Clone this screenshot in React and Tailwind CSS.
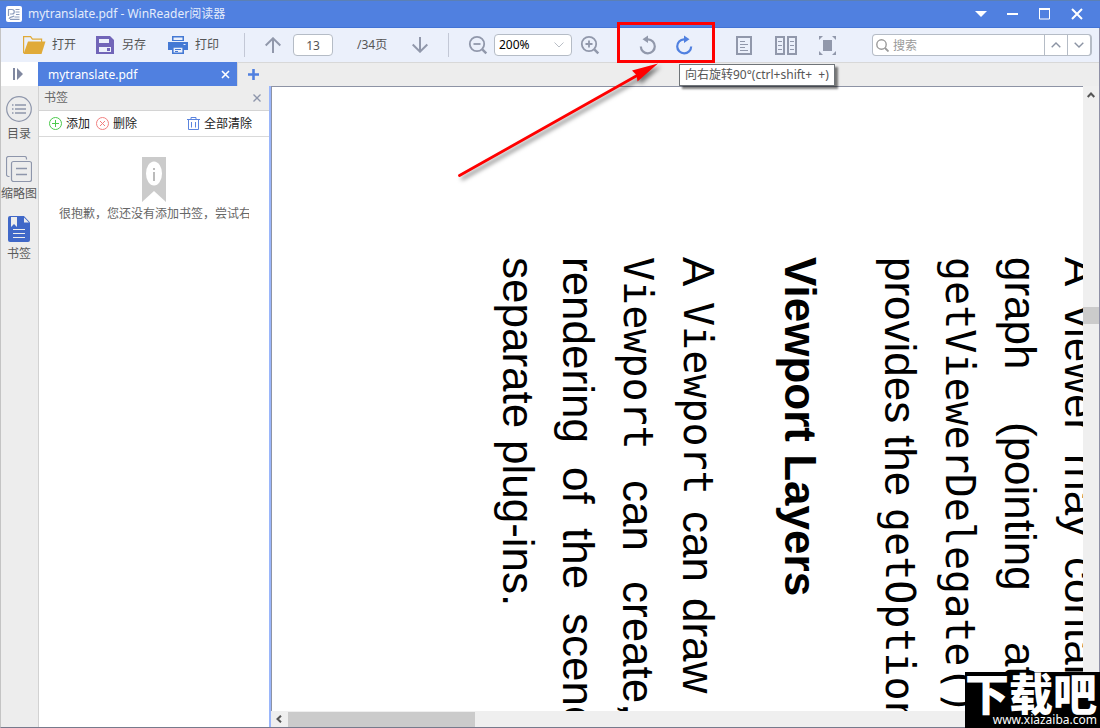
import React from "react";

const UI = "font-['Noto_Sans','Noto_Sans_CJK_SC',sans-serif]";

function Divider() {
  return <span className="h-6 w-px shrink-0 bg-[#c3c8d6]" />;
}

function ToolButton({ label, className = "", color = "text-[#9198ab]", children }) {
  return (
    <button type="button" aria-label={label} className={`flex h-7 shrink-0 items-center justify-center ${color} ${className}`}>
      {children}
    </button>
  );
}

function TitleBar() {
  return (
    <header className="flex h-7 shrink-0 items-center border-t border-b border-t-[#5c80b4] border-b-[#4374d6] bg-[#5080e0] pl-1.5 pr-[7px]">
      <svg width="16" height="16" viewBox="0 0 16 16" className="shrink-0">
        <rect width="16" height="16" rx="2" fill="#fff" />
        <path d="M2.500 10V3.500h3.500a2.200 2.200 0 0 1 0 4.500H4M3 12.800c1.500-3 4-1 5-3M9.500 3.500h4M9.500 6h4M10 8.500h3.500M8.500 11h5M4 13.300h9.500" fill="none" stroke="#8b9bbb" strokeWidth="1.200" />
      </svg>
      <h1 className="ml-1.5 flex-1 text-xs leading-5 text-[#e4ecfb]">mytranslate.pdf - WinReader阅读器</h1>
      <button type="button" aria-label="菜单" className="flex h-6 w-8 items-center justify-center">
        <svg width="12" height="6" viewBox="0 0 12 6"><path d="M0 0h12L6 6z" fill="#fff" /></svg>
      </button>
      <button type="button" aria-label="最小化" className="flex h-6 w-8 items-center justify-center">
        <svg width="12" height="12" viewBox="0 0 12 12"><path d="M0 6h11" stroke="#fff" strokeWidth="2" /></svg>
      </button>
      <button type="button" aria-label="最大化" className="flex h-6 w-8 items-center justify-center">
        <svg width="12" height="12" viewBox="0 0 12 12"><path d="M.5 1h10v10h-10z" fill="none" stroke="#fff" /><path d="M0 1h11" stroke="#fff" strokeWidth="2" /></svg>
      </button>
      <button type="button" aria-label="关闭" className="flex h-6 w-8 items-center justify-center">
        <svg width="12" height="12" viewBox="0 0 12 12"><path d="M1 1l10 10M11 1L1 11" stroke="#fff" strokeWidth="2" /></svg>
      </button>
    </header>
  );
}

function Magnifier({ plus }) {
  return (
    <svg width="20" height="20" viewBox="0 0 20 20" fill="none" stroke="currentColor">
      <circle cx="9" cy="9" r="7.200" strokeWidth="1.800" />
      <path d="M14.300 14.300l4 4" strokeWidth="2.400" />
      <path d={plus ? "M5.500 9h7M9 5.500v7" : "M5.500 9h7"} strokeWidth="1.800" />
    </svg>
  );
}

function RotateRight({ className }) {
  return (
    <svg width="18" height="20" viewBox="0 0 18 20" className={className}>
      <path d="M9 4.300a7 7 0 1 0 7.200 7.200" fill="none" stroke="currentColor" strokeWidth="2.200" />
      <path d="M9 .5l5.500 3.800L9 8z" fill="currentColor" />
    </svg>
  );
}

function Toolbar() {
  return (
    <div className="flex h-[34px] shrink-0 items-center bg-[#ebf0fb] pl-[22px] pr-[7px] text-xs text-[#555]">
      <button type="button" className="flex w-[72px] items-center gap-1.5">
        <svg width="23" height="18" viewBox="0 0 23 18">
          <path d="M.6 17V.6h7l1.800 2.600h9.200V7" fill="none" stroke="#e0aa38" strokeWidth="1.200" />
          <path d="M5 5.500h17.500L18.500 18H.5z" fill="#e0aa38" />
        </svg>
        打开
      </button>
      <button type="button" className="flex w-[73px] items-center gap-2">
        <svg width="19" height="18" viewBox="0 0 19 18">
          <path d="M1 0h14l4 4v14H1z" fill="#7165b8" />
          <path d="M4 3h10v4H4zM4 11h12v5H4z" fill="#ebf0fb" />
          <path d="M12 12h3v3h-3z" fill="#7165b8" />
        </svg>
        另存
      </button>
      <button type="button" className="flex w-[76px] items-center gap-[7px]">
        <svg width="20" height="18" viewBox="0 0 20 18">
          <path d="M4 0h12v5H4zM0 6h20v8h-4v-3H4v3H0z" fill="#4479d4" />
          <path d="M5.500 1.500h9V4h-9z" fill="#ebf0fb" />
          <path d="M4.800 11h10.400v6.200H4.800z" fill="#ebf0fb" stroke="#4479d4" strokeWidth="1.600" />
          <path d="M7 13.500h6M7 15.500h3" stroke="#4479d4" />
          <path d="M15.500 8h2v1h-2z" fill="#ebf0fb" />
        </svg>
        打印
      </button>
      <Divider />
      <ToolButton label="上一页" className="ml-5 w-4">
        <svg width="16" height="16" viewBox="0 0 16 16" className="shrink-0"><path d="M8 16V1.500M.7 8.500L8 1.300l7.300 7.200" fill="none" stroke="currentColor" strokeWidth="2" /></svg>
      </ToolButton>
      <input aria-label="页码" defaultValue="13" className="ml-3 h-[22px] w-10 shrink-0 rounded border border-[#b5bcc6] bg-white text-center text-xs text-[#555]" />
      <span className="ml-6 w-[55px] shrink-0">/34页</span>
      <ToolButton label="下一页" className="w-4">
        <svg width="16" height="16" viewBox="0 0 16 16" className="shrink-0"><path d="M8 0v14.500M.7 7.500L8 14.700l7.300-7.200" fill="none" stroke="currentColor" strokeWidth="2" /></svg>
      </ToolButton>
      <span className="w-5 shrink-0" />
      <Divider />
      <ToolButton label="缩小" className="ml-[19px] w-5"><Magnifier /></ToolButton>
      <div className="relative ml-1.5 shrink-0">
        <select aria-label="缩放比例" className="block h-[22px] w-[78px] appearance-none rounded border border-[#b5bcc6] bg-white pl-1 text-xs leading-5 text-black">
          <option>200%</option>
        </select>
        <svg width="10" height="6" viewBox="0 0 10 6" className="pointer-events-none absolute right-2 top-2"><path d="M.5.5L5 5 9.500.5" fill="none" stroke="#b9bec6" /></svg>
      </div>
      <ToolButton label="放大" className="ml-2 w-5"><Magnifier plus /></ToolButton>
      <ToolButton label="向左旋转" className="ml-[39px] w-[18px]"><RotateRight className="-scale-x-100" /></ToolButton>
      <ToolButton label="向右旋转" className="ml-[18px] w-[18px]" color="text-[#5080e0]"><RotateRight /></ToolButton>
      <ToolButton label="单页" className="ml-[43px] w-4">
        <svg width="16" height="19" viewBox="0 0 16 19" fill="none" stroke="currentColor">
          <path d="M1 1h14v17H1z" strokeWidth="2" /><path d="M4 5.500h5M4 8.500h8M4 11.500h5M4 14.500h8" />
        </svg>
      </ToolButton>
      <ToolButton label="双页" className="ml-[23px] w-[22px]">
        <svg width="22" height="19" viewBox="0 0 22 19" fill="none" stroke="currentColor">
          <path d="M1 1h8v17H1zM13 1h8v17h-8z" strokeWidth="2" /><path d="M3 5.500h4M3 9.500h4M3 13.500h4M15 5.500h4M15 9.500h4M15 13.500h4" />
        </svg>
      </ToolButton>
      <ToolButton label="全屏" className="ml-[22px] w-[17px]">
        <svg width="17" height="19" viewBox="0 0 17 19" fill="currentColor">
          <path d="M4 4h9v11H4zM0 0h4L0 4zM13 0h4v4zM0 15l4 4H0zM17 15v4h-4z" />
        </svg>
      </ToolButton>
      <div className="ml-auto flex h-[22px] w-[220px] shrink-0 items-center overflow-hidden rounded border border-r-2 border-[#b5bcc6] bg-white">
        <svg width="13" height="13" viewBox="0 0 13 13" className="ml-[3px] shrink-0" fill="none" stroke="#9a9a9a"><circle cx="5.500" cy="5.500" r="4.700" strokeWidth="1.400" /><path d="M9 9l3.500 3.500" strokeWidth="1.800" /></svg>
        <input aria-label="搜索" placeholder="搜索" className="ml-1 h-5 w-0 flex-1 text-xs outline-none placeholder:text-[#999]" />
        <button type="button" aria-label="上一个" className="flex h-5 w-[23px] items-center justify-center border-l border-[#b5bcc6]">
          <svg width="10" height="6" viewBox="0 0 10 6"><path d="M.7 5.300L5 1l4.300 4.300" fill="none" stroke="#8b93a3" strokeWidth="1.400" /></svg>
        </button>
        <button type="button" aria-label="下一个" className="flex h-5 w-[23px] items-center justify-center border-l border-[#b5bcc6]">
          <svg width="10" height="6" viewBox="0 0 10 6"><path d="M.7.7L5 5 9.300.7" fill="none" stroke="#8b93a3" strokeWidth="1.400" /></svg>
        </button>
      </div>
    </div>
  );
}

function TabBar() {
  return (
    <div className="flex h-[25px] shrink-0 border-b border-[#d4d4d4] bg-[#ededed]">
      <button type="button" aria-label="展开侧栏" className="flex w-[37px] shrink-0 items-center justify-center bg-white pr-1">
        <svg width="10" height="12" viewBox="0 0 10 12"><path d="M0 0h2v12H0zM4 0l6 6-6 6z" fill="#8088a0" /></svg>
      </button>
      <div className="-mb-px flex w-[199px] shrink-0 items-center bg-[#5080e0] pl-2.5 pr-[7px]">
        <span className="flex-1 text-xs leading-5 text-white">mytranslate.pdf</span>
        <button type="button" aria-label="关闭标签">
          <svg width="9" height="9" viewBox="0 0 9 9"><path d="M1 1l7 7M8 1L1 8" stroke="#fff" strokeWidth="1.600" /></svg>
        </button>
      </div>
      <button type="button" aria-label="新建标签" className="flex flex-1 items-center border-l border-t border-[#d8d8d8] pl-2.5">
        <svg width="11" height="11" viewBox="0 0 11 11"><path d="M0 5.500h11M5.500 0v11" stroke="#5080e0" strokeWidth="2.600" /></svg>
      </button>
    </div>
  );
}

function SideButton({ label, children }) {
  return (
    <button type="button" className="flex h-[60px] w-full flex-col items-center pt-[3px] text-xs leading-5 whitespace-nowrap text-[#5a5a5a]">
      {children}
      <span className="mt-0.5">{label}</span>
    </button>
  );
}

function SideRail() {
  return (
    <nav className="flex w-[38px] shrink-0 flex-col border-r border-[#d2d2d2] bg-[#ededed] pt-[7px] pr-px">
      <SideButton label="目录">
        <svg width="26" height="26" viewBox="0 0 26 26" className="shrink-0" fill="none" stroke="#8e96ab">
          <circle cx="13" cy="13" r="12.300" strokeWidth="1.200" />
          <path d="M9 9h11M9 13h11M9 17h11M6 9h1.500M6 13h1.500M6 17h1.500" strokeWidth="1.600" />
        </svg>
      </SideButton>
      <SideButton label="缩略图">
        <svg width="26" height="26" viewBox="0 0 26 26" className="shrink-0" fill="none" stroke="#8e96ab" strokeWidth="1.200">
          <path d="M3.500 20.500H2.500a2 2 0 0 1-2-2V2.500a2 2 0 0 1 2-2h16a2 2 0 0 1 2 2v1" />
          <rect x="5.500" y="5.500" width="20" height="20" rx="2" />
          <path d="M10 12.500h11M10 18.500h11" strokeWidth="1.600" />
        </svg>
      </SideButton>
      <SideButton label="书签">
        <svg width="22" height="26" viewBox="0 0 22 26" className="shrink-0">
          <path d="M2 0h14l6 6.500V24a2 2 0 0 1-2 2H2a2 2 0 0 1-2-2V2a2 2 0 0 1 2-2z" fill="#4068c8" />
          <path d="M3 1h6v10L6 8l-3 3zM16 1.500v5h5z" fill="#ededed" />
          <path d="M5 13.500h12M5 17.500h12M5 21.500h12" stroke="#ededed" />
        </svg>
      </SideButton>
    </nav>
  );
}

function BookmarkPanel() {
  return (
    <aside className="flex w-[232px] shrink-0 flex-col border-r-2 border-[#9ab6fb] bg-white text-xs">
      <div className="flex h-[25px] shrink-0 items-center border-b border-[#d4d4d4] bg-[#ededed] pl-[5px] pr-2">
        <h2 className="flex-1 text-[#666]">书签</h2>
        <button type="button" aria-label="关闭书签">
          <svg width="8" height="8" viewBox="0 0 8 8"><path d="M.5.5l7 7M7.500.5l-7 7" stroke="#8e96ab" strokeWidth="1.300" /></svg>
        </button>
      </div>
      <div className="flex h-[26px] shrink-0 items-center border-b border-[#d9d9d9] pl-2.5 pr-[17px] text-[#222]">
        <button type="button" className="flex items-center gap-1">
          <svg width="13" height="13" viewBox="0 0 13 13" fill="none" stroke="#4cc94c"><circle cx="6.500" cy="6.500" r="6" /><path d="M3 6.500h7M6.500 3v7" /></svg>
          添加
        </button>
        <button type="button" className="ml-1.5 flex items-center gap-1">
          <svg width="13" height="13" viewBox="0 0 13 13" fill="none" stroke="#f08080"><circle cx="6.500" cy="6.500" r="6" /><path d="M4 4l5 5M9 4L4 9" /></svg>
          删除
        </button>
        <button type="button" className="ml-auto flex items-center gap-1">
          <svg width="13" height="13" viewBox="0 0 13 13" fill="none" stroke="#5b84de"><path d="M0 2.500h13M4 2.500V.5h5v2M1.500 2.500v10h10v-10M4.500 5v5.500M8.500 5v5.500" /></svg>
          全部清除
        </button>
      </div>
      <div className="flex flex-col items-center px-5 pt-5">
        <svg width="24" height="45" viewBox="0 0 24 45">
          <path d="M0 0h24v45L12 34 0 45z" fill="#cbcbcb" />
          <ellipse cx="12" cy="16.500" rx="8" ry="12" fill="#fff" />
          <path d="M11 15h2v9h-2zM11 11h2v2h-2z" fill="#bbb" />
        </svg>
        <p className="mt-0.5 w-full overflow-hidden whitespace-nowrap leading-5 text-[#666]">很抱歉，您还没有添加书签，尝试右</p>
      </div>
    </aside>
  );
}

function Mono({ children }) {
  return <code className="font-['DejaVu_Sans_Mono',monospace] text-[40px]">{children}</code>;
}

function Line({ gap, words }) {
  return (
    <div className={`flex ${gap}`}>
      {words.map((word, i) => (
        <span key={i}>{word}</span>
      ))}
    </div>
  );
}

function DocumentPane() {
  return (
    <main className="flex min-w-0 flex-1 flex-col bg-white">
      <div className="flex min-h-0 flex-1">
        <div className="flex min-w-0 flex-1 items-start overflow-hidden border-l border-t border-[#8d93a5] pt-[170px]">
          <article className="ml-[216px] flex shrink-0 flex-col whitespace-nowrap font-['Liberation_Sans',Arial,sans-serif] text-[44px] leading-[60px] text-black [writing-mode:vertical-rl]">
            <Line gap="gap-5" words={["A", "viewer", "may", "contain"]} />
            <Line gap="gap-[52px]" words={["graph", "(pointing", "at"]} />
            <Line gap="gap-3" words={[<Mono>getViewerDelegate()</Mono>]} />
            <Line gap="gap-3" words={["provides", "the", <Mono>getOption</Mono>]} />
            <h2 className="mr-10 ml-[42px] font-bold">Viewport Layers</h2>
            <Line gap="gap-4" words={["A", <Mono>Viewport</Mono>, "can", "draw", "a"]} />
            <Line gap="gap-[30px]" words={[<Mono>Viewport</Mono>, "can", "create,"]} />
            <Line gap="gap-6" words={["rendering", "of", "the", "scene"]} />
            <Line gap="gap-3" words={["separate", "plug-ins."]} />
          </article>
        </div>
        <div className="flex w-4 shrink-0 flex-col items-center bg-[#efefef] pt-[5px]">
          <svg width="8" height="8" viewBox="0 0 8 8" className="shrink-0"><path d="M.7 6L4 2.500 7.300 6" fill="none" stroke="#555" strokeWidth="2" /></svg>
          <span className="mt-52 h-[17px] w-full bg-[#cbcbcb]" />
        </div>
      </div>
      <div className="flex h-4 shrink-0 items-center bg-[#efefef]">
        <svg width="8" height="8" viewBox="0 0 8 8" className="mx-1 shrink-0"><path d="M6 .7L2.500 4 6 7.300" fill="none" stroke="#555" strokeWidth="2" /></svg>
        <span className="ml-px h-[15px] w-[187px] bg-[#cbcbcb]" />
      </div>
    </main>
  );
}

function Callout() {
  return (
    <>
      <svg width="220" height="130" viewBox="0 0 220 130" className="pointer-events-none absolute left-[450px] top-[56px] drop-shadow-[3px_3px_2px_rgba(0,0,0,0.5)]">
        <path d="M9.500 119.500L188 19" fill="none" stroke="#f00" strokeWidth="2.800" strokeLinecap="round" />
        <path d="M208 7.500L182 14.500l4.500 4.500 1 6.500z" fill="#f00" />
      </svg>
      <div className="pointer-events-none absolute left-[617px] top-[22px] h-[41px] w-[98px] border-[3px] border-[#f00]" />
      <div role="tooltip" className="absolute left-[679px] top-16 h-[22px] border border-[#6f7478] bg-white px-[5px] text-xs leading-5 whitespace-nowrap text-[#555] shadow-[3px_3px_2px_rgba(0,0,0,0.5)]">
        向右旋转90°(ctrl+shift+&nbsp; +)
      </div>
    </>
  );
}

function Watermark() {
  return (
    <div className="absolute bottom-0 right-0 flex h-14 w-[135px] flex-col items-end overflow-hidden bg-black pr-[3px] text-white">
      <span className="font-['Noto_Sans_CJK_SC',sans-serif] text-[44px] leading-10 font-black whitespace-nowrap">下载吧</span>
      <span className="text-xs leading-4">www.xiazaiba.com</span>
    </div>
  );
}

export default function App() {
  return (
    <div className={`relative flex h-screen flex-col overflow-hidden bg-white ${UI}`}>
      <TitleBar />
      <div className="flex min-h-0 flex-1 flex-col border-r border-b border-l border-r-[#8f90a6] border-b-[#777a8c] border-l-[#c4c4c4]">
        <Toolbar />
        <TabBar />
        <div className="-mt-px flex min-h-0 flex-1">
          <SideRail />
          <BookmarkPanel />
          <DocumentPane />
        </div>
      </div>
      <Callout />
      <Watermark />
    </div>
  );
}
